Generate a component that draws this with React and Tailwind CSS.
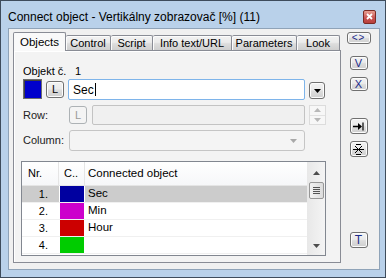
import React from "react";

function Btn({ className = "", children }) {
  return (
    <div
      className={
        "flex items-center justify-center rounded-[3px] border border-[#707070] bg-[linear-gradient(#f2f2f2,#ebebeb_45%,#dddddd_55%,#cfcfcf)] shadow-[inset_0_0_0_1px_#fcfcfc] " +
        className
      }
    >
      {children}
    </div>
  );
}

function Tab({ w, label, active }) {
  if (active) {
    return (
      <div
        className={`${w} h-[19px] -mb-px relative z-10 border border-b-0 border-[#898c95] bg-[#f9f9f9] rounded-t-[2px] flex items-start justify-center pt-[4px] text-[11.5px]`}
      >
        {label}
      </div>
    );
  }
  return (
    <div
      className={`${w} h-[15px] border border-b-0 border-l-0 border-[#898c95] first:border-l bg-[linear-gradient(#f2f2f2,#ebebeb_45%,#dddddd_55%,#cfcfcf)] shadow-[inset_1px_1px_0_#fcfcfc] rounded-t-[2px] flex items-center justify-center pt-[1px]`}
    >
      {label}
    </div>
  );
}

function DownTri({ color = "#000" }) {
  return (
    <svg width="7" height="4" viewBox="0 0 7 4">
      <path d="M0 0H7L3.5 4Z" fill={color} />
    </svg>
  );
}

const rows = [
  { n: "1.", c: "#0000a0", t: "Sec", sel: true },
  { n: "2.", c: "#cc00cc", t: "Min" },
  { n: "3.", c: "#cc0000", t: "Hour" },
  { n: "4.", c: "#00cc00", t: "" },
];

export default function App() {
  return (
    <div className="w-[386px] h-[278px] bg-[#b9d1ea] border border-[#3e4c5c] flex flex-col font-['Liberation_Sans',Arial,sans-serif] text-[11px] text-black leading-none select-none overflow-hidden">
      {/* title bar */}
      <div className="h-[27px] shrink-0 flex items-center justify-between pl-[7px] pr-[9px] pt-[4px]">
        <span className="text-[12px]">Connect object - Vertikálny zobrazovač [%] (11)</span>
        <div className="w-[13px] h-[14px] rounded-[2px] border border-[#7a2a24] bg-[linear-gradient(#e8a093,#c75050_60%,#b8403a)] flex items-center justify-center">
          <svg width="7" height="7" viewBox="0 0 7 7">
            <path d="M1 1L6 6M6 1L1 6" stroke="#fff" strokeWidth="1.8" />
          </svg>
        </div>
      </div>

      {/* client */}
      <div className="flex-1 ml-[7px] mr-[5px] mb-[7px] border border-[#8fa3b8] bg-[#f0f0f0] flex pl-[4px] pt-[3px]">
        {/* tab control */}
        <div className="w-[328px] h-[231px] flex flex-col">
          <div className="h-[18px] flex items-end">
            <Tab w="w-[53px]" label="Objects" active />
            <Tab w="w-[45px]" label="Control" />
            <Tab w="w-[42px]" label="Script" />
            <Tab w="w-[79px]" label="Info text/URL" />
            <Tab w="w-[65px]" label="Parameters" />
            <Tab w="w-[43px]" label="Look" />
          </div>
          <div className="flex-1 border border-[#898c95] bg-[#f3f3f3] shadow-[inset_1px_1px_0_#ffffff] flex flex-col pl-[9px]">
            {/* Objekt c. */}
            <div className="mt-[14px] h-[12px] flex items-center">
              <span className="w-[52px]">Objekt č.</span>
              <span>1</span>
            </div>
            {/* row 1 */}
            <div className="mt-[2px] h-[21px] flex items-start">
              <div className="w-[19px] h-[20px] border border-[#6d6d6d] bg-[#0000cc] shadow-[inset_1px_1px_0_#404040]" />
              <Btn className="ml-[4px] mt-[2px] w-[18px] h-[17px] text-[11px]">L</Btn>
              <div className="ml-[4px] w-[237px] h-[21px] rounded-[2px] border border-[#7eb4ea] bg-white flex items-center pl-[4px] text-[12px]">
                Sec<span className="w-px h-[13px] bg-black ml-px" />
              </div>
              <Btn className="ml-[4px] mt-[3px] w-[16px] h-[17px]">
                <DownTri />
              </Btn>
            </div>
            {/* Row */}
            <div className="mt-[5px] h-[20px] flex items-center">
              <span className="w-[46px] text-[#222]">Row:</span>
              <div className="w-[18px] h-[18px] rounded-[3px] border border-[#adb2b5] bg-[#f4f4f4] flex items-center justify-center text-[#9a9a9a]">
                L
              </div>
              <div className="ml-[5px] w-[213px] h-[20px] rounded-[2px] border border-[#c3c3c3] bg-[#f0f0f0]" />
              <div className="ml-[4px] w-[17px] h-[20px] border border-[#dcdcdc] bg-[#f7f7f7] flex flex-col">
                <div className="flex-1 flex items-center justify-center border-b border-[#e2e2e2]">
                  <svg width="7" height="4" viewBox="0 0 7 4">
                    <path d="M0 4H7L3.5 0Z" fill="#b8b8b8" />
                  </svg>
                </div>
                <div className="flex-1 flex items-center justify-center">
                  <DownTri color="#b8b8b8" />
                </div>
              </div>
            </div>
            {/* Column */}
            <div className="mt-[5px] h-[21px] flex items-center">
              <span className="w-[46px] text-[#222]">Column:</span>
              <div className="w-[236px] h-[21px] rounded-[3px] border border-[#c5c5c5] bg-[#f4f4f4] flex items-center justify-end pr-[7px]">
                <DownTri color="#a8a8a8" />
              </div>
            </div>
            {/* list */}
            <div className="mt-[10px] -ml-[2px] w-[305px] h-[95px] border border-[#828790] bg-white flex overflow-hidden">
              <div className="flex-1 flex flex-col">
                <div className="h-[24px] shrink-0 flex items-stretch bg-[linear-gradient(#ffffff,#f6f7f9)] border-b border-[#e5e5e5]">
                  <div className="w-[37px] flex items-center pl-[6px] border-r border-[#e5e5e5]">Nr.</div>
                  <div className="w-[26px] flex items-center pl-[5px] border-r border-[#e5e5e5]">C..</div>
                  <div className="flex-1 flex items-center pl-[3px] text-[11.5px]">Connected object</div>
                </div>
                {rows.map((r) => (
                  <div key={r.n} className="h-[17px] shrink-0 flex border-b border-[#f0f0f0]">
                    <div className={`w-[37px] flex items-center justify-end pr-[11px] ${r.sel ? "bg-[#cccccc]" : ""}`}>{r.n}</div>
                    <div className="w-[26px] flex pl-px pr-px">
                      <div className="flex-1" style={{ background: r.c }} />
                    </div>
                    <div className={`flex-1 flex items-center pl-[3px] text-[11.5px] ${r.sel ? "bg-[#cccccc]" : ""}`}>{r.t}</div>
                  </div>
                ))}
              </div>
              {/* scrollbar */}
              <div className="w-[18px] bg-[linear-gradient(90deg,#e8e8e8,#f4f4f4)] flex flex-col items-center">
                <div className="h-[20px] flex items-center justify-center pt-[2px]">
                  <svg width="7" height="4" viewBox="0 0 7 4">
                    <path d="M0 4H7L3.5 0Z" fill="#4d4d4d" />
                  </svg>
                </div>
                <div className="w-[15px] h-[17px] rounded-[2px] border border-[#979797] bg-[linear-gradient(90deg,#f2f2f2,#dcdcdc)] flex flex-col items-center justify-center gap-[1px]">
                  <div className="w-[7px] h-px bg-[#555]" />
                  <div className="w-[7px] h-px bg-[#555]" />
                  <div className="w-[7px] h-px bg-[#555]" />
                  <div className="w-[7px] h-px bg-[#555]" />
                </div>
                <div className="flex-1" />
                <div className="h-[16px] flex items-center justify-center pb-[2px]">
                  <DownTri color="#4d4d4d" />
                </div>
              </div>
            </div>
          </div>
        </div>

        {/* right buttons */}
        <div className="ml-[5px] w-[25px] flex flex-col items-center">
          <Btn className="w-[24px] h-[12px] text-[10px] text-[#1a2a8a]">
            <span className="tracking-[1px]">&lt;&gt;</span>
          </Btn>
          <Btn className="mt-[12px] w-[18px] h-[14px] text-[11px] text-[#1a2a8a]">V</Btn>
          <Btn className="mt-[7px] w-[18px] h-[14px] text-[11px] text-[#1a2a8a]">X</Btn>
          <Btn className="mt-[27px] w-[18px] h-[16px]">
            <svg width="11" height="9" viewBox="0 0 11 9">
              <path d="M0 4.5H7" stroke="#000" strokeWidth="1.5" />
              <path d="M5 1L9 4.5L5 8Z" fill="#000" />
              <path d="M10 0.5V8.5" stroke="#000" strokeWidth="1.2" />
            </svg>
          </Btn>
          <Btn className="mt-[7px] w-[18px] h-[16px]">
            <svg width="11" height="11" viewBox="0 0 11 11">
              <path d="M0 5.5H11M2 2L9 9M9 2L2 9M3 0.5H8M3 10.5H8" stroke="#000" strokeWidth="1" />
            </svg>
          </Btn>
          <Btn className="mt-[75px] w-[18px] h-[16px] text-[12px] text-[#1a2a8a]">T</Btn>
        </div>
      </div>
    </div>
  );
}
